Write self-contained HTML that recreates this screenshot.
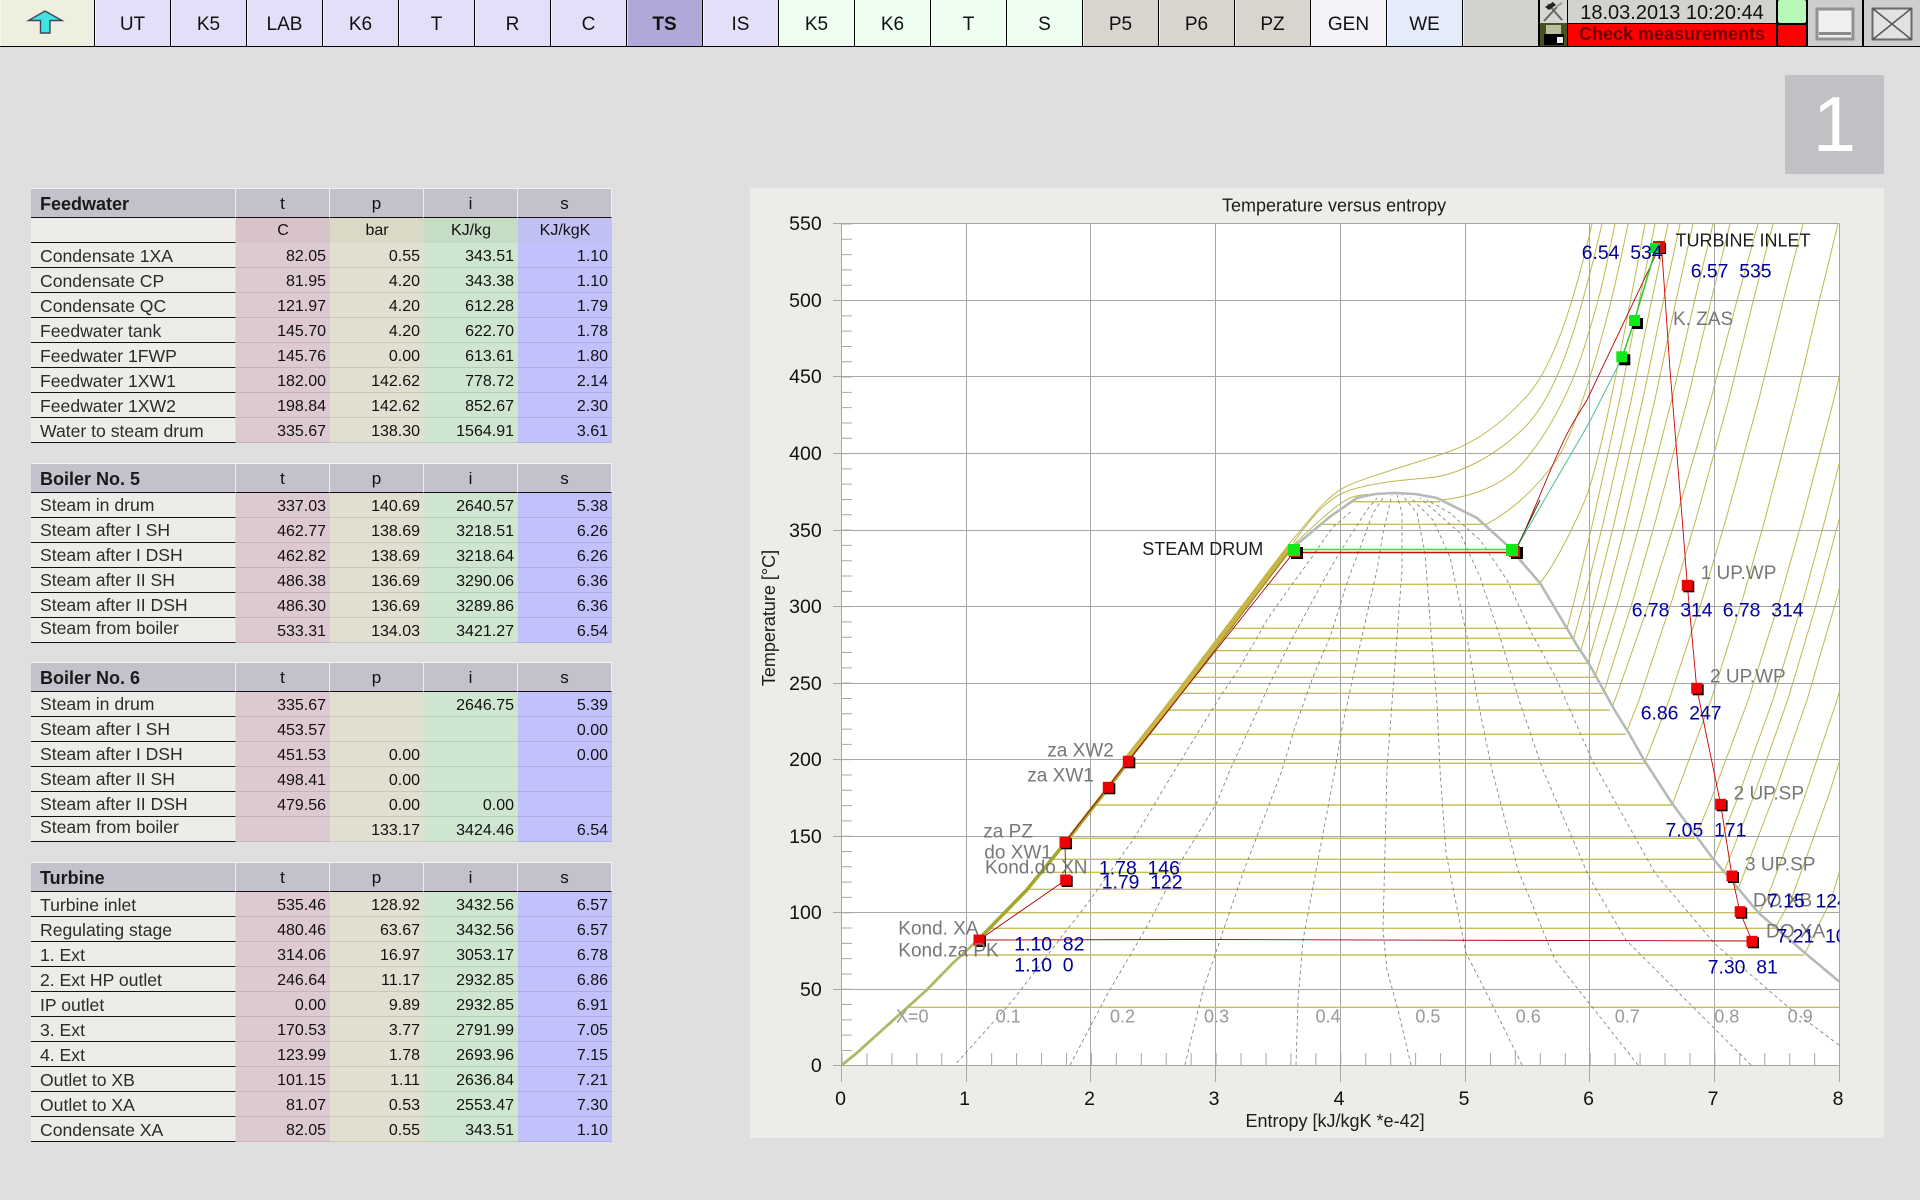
<!DOCTYPE html>
<html><head><meta charset="utf-8"><title>Temperature versus entropy</title>
<style>
html,body{margin:0;padding:0;width:1920px;height:1200px;overflow:hidden;background:#dfdfdf;font-family:"Liberation Sans",sans-serif;color:#111}
#bar{position:absolute;left:0;top:0;width:1539px;height:46px;display:flex;gap:1px;background:#000;border-bottom:1px solid #000}
#bar div{width:75px;height:46px;display:flex;align-items:center;justify-content:center;font-size:19px;padding-top:3px;box-sizing:border-box;box-shadow:inset 1px 0 0 rgba(255,255,255,.6)}
#bar .u{background:#e4def8}#bar .m{background:#eefff2}#bar .g{background:#d8d5ce}
.a{position:absolute}
.tb{position:absolute;left:31px;width:581px}
.r{display:flex;height:25px}
.r>div{box-sizing:border-box;height:25px;white-space:nowrap;overflow:hidden}
.n{width:205px;background:#eeece8;border-bottom:1px solid #111;padding-left:9px;font-size:17.6px;color:#2b2b2b;border-right:1px solid #dfdfdf}
.t,.p,.i,.s{width:94px;text-align:right;padding-right:4px;font-size:16px;border-bottom:1px solid rgba(0,0,0,.1)}
.r>.n{line-height:25px}
.tf .r>.n{line-height:26px}
.tt .r>.n{line-height:27px}
.r>.t,.r>.p,.r>.i,.r>.s{line-height:27px}
.t{background:#ddc9d1}.p{background:#e1dfcf}.i{background:#cee6d0}.s{background:#c1c1fb}
.h{height:30px}
.h>div{height:30px;background:#c4c0cc;border-bottom:1px solid #111;border-top:1px solid #f2f2f2;text-align:center;font-size:17px;padding:0;border-right:1px solid #eee}
.tb .r.h>div{line-height:30px}
.h>.n{text-align:left;padding-left:9px;font-weight:bold;font-size:18px;color:#1a1a1a}
.un>div{text-align:center;padding:0;border-bottom:0}
.tb .r.un>div{line-height:25px}
.un>.t{background:#d7c3c8}.un>.p{background:#d9d9c5}.un>.i{background:#c5dcc5}.un>.s{background:#c0c0f2}
.un>.n{border-bottom:1px solid #111}
.up{position:relative;top:-2px;display:block}
svg text{font-family:"Liberation Sans",sans-serif;font-size:18px;white-space:pre}
svg text.gr{fill:#777;font-size:19px}
svg text.bl{fill:#00009c;font-size:19.4px}
.bk{fill:#1c1c1c}.xq{fill:#999}
svg text.ax{font-size:19.5px;fill:#111}
</style></head><body>
<div id="bar">
<div style="width:94px;background:#efefdf"></div>
<div class="u">UT</div><div class="u">K5</div><div class="u">LAB</div><div class="u">K6</div><div class="u">T</div><div class="u">R</div><div class="u">C</div>
<div style="background:#b0a8d8;font-weight:bold">TS</div>
<div class="u">IS</div>
<div class="m">K5</div><div class="m">K6</div><div class="m">T</div><div class="m">S</div>
<div class="g">P5</div><div class="g">P6</div><div class="g">PZ</div>
<div style="background:#f5f3f8">GEN</div><div style="background:#e4ecfb">WE</div><div style="background:#d4d2cc"></div>
</div>
<svg class="a" style="left:0;top:0" width="95" height="46"><polygon points="45,11 62,20.5 50,20.5 50,33 40.5,33 40.5,20.5 28.5,20.5" fill="#40e4e4" stroke="#445" stroke-width="1.4"/></svg>

<div class="a" style="left:1539px;top:0;width:381px;height:47px;background:#000"></div>
<svg class="a" style="left:1540px;top:0" width="27" height="46">
<rect width="27" height="23" fill="#d6d6d2"/>
<path d="M4 21L17 7M8 4L22 20" stroke="#666" stroke-width="2" fill="none"/>
<path d="M5 7L13 2L16 5L9 10Z" fill="#222"/><path d="M17 6L22 3" stroke="#999" stroke-width="2"/>
<rect y="23" width="27" height="23" fill="#4c5020"/>
<rect x="6" y="25" width="15" height="9" fill="#b8bea0"/>
<rect x="4" y="34" width="20" height="11" fill="#000"/>
<rect x="17" y="37" width="6" height="6" fill="#eee"/>
</svg>
<div class="a" style="left:1568px;top:0;width:208px;height:23px;background:#d4d2cc;text-align:center;font-size:20px;line-height:26px">18.03.2013 10:20:44</div>
<div class="a" style="left:1568px;top:24px;width:208px;height:22px;background:#f00;text-align:center;font-size:18px;font-weight:bold;line-height:21px;color:#700000">Check measurements</div>
<div class="a" style="left:1778px;top:0;width:28px;height:23px;background:#b8f8b8;border-radius:2px"></div>
<div class="a" style="left:1778px;top:25px;width:28px;height:21px;background:#f00;border-radius:2px"></div>
<svg class="a" style="left:1808px;top:0" width="112" height="46">
<rect width="54" height="46" fill="#cecece"/>
<rect x="9" y="9" width="36" height="30" fill="#efefef" stroke="#919191" stroke-width="3"/>
<rect x="11" y="32" width="32" height="3" fill="#8a8a8a"/>
<rect x="56" y="0" width="56" height="46" fill="#cecece"/>
<rect x="64.5" y="8.5" width="39" height="31" fill="#e2e2e2" stroke="#6a6a6a" stroke-width="2"/>
<path d="M64 8L104 40M104 8L64 40" stroke="#555" stroke-width="1.5"/>
</svg>

<div class="a" style="left:1785px;top:75px;width:99px;height:99px;background:#c2c0c4;color:#fff;font-size:78px;line-height:99px;text-align:center;">1</div>

<div class="tb tf" style="top:188px">
<div class="r h"><div class="n">Feedwater</div><div class="t">t</div><div class="p">p</div><div class="i">i</div><div class="s">s</div></div>
<div class="r un"><div class="n"></div><div class="t">C</div><div class="p">bar</div><div class="i">KJ/kg</div><div class="s">KJ/kgK</div></div>
<div class="r"><div class="n">Condensate 1XA</div><div class="t">82.05</div><div class="p">0.55</div><div class="i">343.51</div><div class="s">1.10</div></div>
<div class="r"><div class="n">Condensate CP</div><div class="t">81.95</div><div class="p">4.20</div><div class="i">343.38</div><div class="s">1.10</div></div>
<div class="r"><div class="n">Condensate QC</div><div class="t">121.97</div><div class="p">4.20</div><div class="i">612.28</div><div class="s">1.79</div></div>
<div class="r"><div class="n">Feedwater tank</div><div class="t">145.70</div><div class="p">4.20</div><div class="i">622.70</div><div class="s">1.78</div></div>
<div class="r"><div class="n">Feedwater 1FWP</div><div class="t">145.76</div><div class="p">0.00</div><div class="i">613.61</div><div class="s">1.80</div></div>
<div class="r"><div class="n">Feedwater 1XW1</div><div class="t">182.00</div><div class="p">142.62</div><div class="i">778.72</div><div class="s">2.14</div></div>
<div class="r"><div class="n">Feedwater 1XW2</div><div class="t">198.84</div><div class="p">142.62</div><div class="i">852.67</div><div class="s">2.30</div></div>
<div class="r"><div class="n">Water to steam drum</div><div class="t">335.67</div><div class="p">138.30</div><div class="i">1564.91</div><div class="s">3.61</div></div>
</div>

<div class="tb" style="top:463px">
<div class="r h"><div class="n">Boiler No. 5</div><div class="t">t</div><div class="p">p</div><div class="i">i</div><div class="s">s</div></div>
<div class="r"><div class="n">Steam in drum</div><div class="t">337.03</div><div class="p">140.69</div><div class="i">2640.57</div><div class="s">5.38</div></div>
<div class="r"><div class="n">Steam after I SH</div><div class="t">462.77</div><div class="p">138.69</div><div class="i">3218.51</div><div class="s">6.26</div></div>
<div class="r"><div class="n">Steam after I DSH</div><div class="t">462.82</div><div class="p">138.69</div><div class="i">3218.64</div><div class="s">6.26</div></div>
<div class="r"><div class="n">Steam after II SH</div><div class="t">486.38</div><div class="p">136.69</div><div class="i">3290.06</div><div class="s">6.36</div></div>
<div class="r"><div class="n">Steam after II DSH</div><div class="t">486.30</div><div class="p">136.69</div><div class="i">3289.86</div><div class="s">6.36</div></div>
<div class="r"><div class="n"><span class="up">Steam from boiler</span></div><div class="t">533.31</div><div class="p">134.03</div><div class="i">3421.27</div><div class="s">6.54</div></div>
</div>

<div class="tb" style="top:662px">
<div class="r h"><div class="n">Boiler No. 6</div><div class="t">t</div><div class="p">p</div><div class="i">i</div><div class="s">s</div></div>
<div class="r"><div class="n">Steam in drum</div><div class="t">335.67</div><div class="p"></div><div class="i">2646.75</div><div class="s">5.39</div></div>
<div class="r"><div class="n">Steam after I SH</div><div class="t">453.57</div><div class="p"></div><div class="i"></div><div class="s">0.00</div></div>
<div class="r"><div class="n">Steam after I DSH</div><div class="t">451.53</div><div class="p">0.00</div><div class="i"></div><div class="s">0.00</div></div>
<div class="r"><div class="n">Steam after II SH</div><div class="t">498.41</div><div class="p">0.00</div><div class="i"></div><div class="s"></div></div>
<div class="r"><div class="n">Steam after II DSH</div><div class="t">479.56</div><div class="p">0.00</div><div class="i">0.00</div><div class="s"></div></div>
<div class="r"><div class="n"><span class="up">Steam from boiler</span></div><div class="t"></div><div class="p">133.17</div><div class="i">3424.46</div><div class="s">6.54</div></div>
</div>

<div class="tb tt" style="top:862px">
<div class="r h"><div class="n">Turbine</div><div class="t">t</div><div class="p">p</div><div class="i">i</div><div class="s">s</div></div>
<div class="r"><div class="n">Turbine inlet</div><div class="t">535.46</div><div class="p">128.92</div><div class="i">3432.56</div><div class="s">6.57</div></div>
<div class="r"><div class="n">Regulating stage</div><div class="t">480.46</div><div class="p">63.67</div><div class="i">3432.56</div><div class="s">6.57</div></div>
<div class="r"><div class="n">1. Ext</div><div class="t">314.06</div><div class="p">16.97</div><div class="i">3053.17</div><div class="s">6.78</div></div>
<div class="r"><div class="n">2. Ext HP outlet</div><div class="t">246.64</div><div class="p">11.17</div><div class="i">2932.85</div><div class="s">6.86</div></div>
<div class="r"><div class="n">IP outlet</div><div class="t">0.00</div><div class="p">9.89</div><div class="i">2932.85</div><div class="s">6.91</div></div>
<div class="r"><div class="n">3. Ext</div><div class="t">170.53</div><div class="p">3.77</div><div class="i">2791.99</div><div class="s">7.05</div></div>
<div class="r"><div class="n">4. Ext</div><div class="t">123.99</div><div class="p">1.78</div><div class="i">2693.96</div><div class="s">7.15</div></div>
<div class="r"><div class="n">Outlet to XB</div><div class="t">101.15</div><div class="p">1.11</div><div class="i">2636.84</div><div class="s">7.21</div></div>
<div class="r"><div class="n">Outlet to XA</div><div class="t">81.07</div><div class="p">0.53</div><div class="i">2553.47</div><div class="s">7.30</div></div>
<div class="r"><div class="n">Condensate XA</div><div class="t">82.05</div><div class="p">0.55</div><div class="i">343.51</div><div class="s">1.10</div></div>
</div>

<svg class="a" style="left:0;top:0" width="1920" height="1200" viewBox="0 0 1920 1200">
<defs>
<clipPath id="pl"><rect x="842" y="224" width="997.5" height="842"/></clipPath>
<polyline id="iso" fill="none" stroke="#c0b84c" stroke-width="1" vector-effect="non-scaling-stroke" points="0,224 -19,300 -43,400 -75,520 -98,600 -130,700 -168,800 -210,900 -250,960 -285,1000 -340,1065"/>
<g id="mr"><rect x="-4" y="-4" width="11" height="11" fill="#000"/><rect x="-5.5" y="-5.5" width="11" height="11" fill="#f00000"/></g>
<g id="mg"><rect x="-3" y="-3" width="11" height="11" fill="#000"/><rect x="-6" y="-6" width="11" height="11" fill="#10e818"/></g>
</defs>
<rect x="750" y="188" width="1134" height="950" fill="#eeece8"/>
<rect x="842" y="224" width="997.5" height="841.5" fill="#fff"/>

<g clip-path="url(#pl)">
<use href="#iso" transform="translate(1984,0) scale(.729,1)"/>
<use href="#iso" transform="translate(1971,0) scale(.857,1)"/>
<use href="#iso" transform="translate(1951.7,0) scale(.882,1)"/>
<use href="#iso" transform="translate(1926,0) scale(.915,1)"/>
<use href="#iso" transform="translate(1909,0) scale(.933,1)"/>
<use href="#iso" transform="translate(1896,0) scale(.947,1)"/>
<use href="#iso" transform="translate(1876,0) scale(.983,1)"/>
<use href="#iso" transform="translate(1838,0) scale(.976,1)"/>
<use href="#iso" transform="translate(1803,0) scale(1.03,1)"/>
<use href="#iso" transform="translate(1773,0) scale(1.03,1)"/>
<use href="#iso" transform="translate(1758,0) scale(1.1,1)"/>
<use href="#iso" transform="translate(1730,0) scale(.99,1)"/>
<use href="#iso" transform="translate(1713,0) scale(.962,1)"/>
<use href="#iso" transform="translate(1693,0) scale(.888,1)"/>
<use href="#iso" transform="translate(1680,0) scale(.868,1)"/>
<use href="#iso" transform="translate(1668,0) scale(.855,1)"/>
<use href="#iso" transform="translate(1655,0) scale(.822,1)"/>
<g fill="none" stroke="#c0b84c" stroke-width="1">
<path d="M1540 583C1553 567 1570 535 1585 500S1625 330 1645 224"/>
<path d="M1485 525C1510 512 1535 490 1555 462S1605 340 1628 224"/>
<path d="M1440 500C1465 498 1490 490 1510 475S1565 410 1585 345S1605 270 1615 224"/>
<path d="M1293 543C1310 520 1325 500 1345 492S1400 480 1427 478S1490 460 1522 430S1575 340 1602 224"/>
<path d="M1288 545C1310 520 1325 497 1345 487S1420 462 1448 452S1500 425 1526 397S1572 310 1592 224"/>
<path d="M1293 545C1315 525 1335 505 1350 498S1390 496 1410 496"/>
</g>
<polygon fill="#fff" points="842,1066 926.7,990 980,938 1026.7,890 1065,843 1108,788 1128,762 1176.7,700 1293,547 1300,541.7 1330,516.7 1356.7,498 1375,494 1393,493 1415,494 1437,498 1477,518 1507,545 1520,560 1540,583 1578,647 1588.6,663 1614.5,710 1630,735 1644,760 1671.8,803 1712.5,858 1758.7,913 1805,953 1839.4,981.7 1839.4,1066"/>
</g>

<g stroke="#a6a6a6" stroke-width="1" fill="none">
<path d="M833 223.5H1839.5M833 300.5H1839.5M833 376.5H1839.5M833 453.5H1839.5M833 530.5H1839.5M833 606.5H1839.5M833 683.5H1839.5M833 759.5H1839.5M833 836.5H1839.5M833 912.5H1839.5M833 989.5H1839.5M833 1065.5H1839.5"/>
<path d="M841.5 224V1082M966.5 224V1082M1090.5 224V1082M1215.5 224V1082M1340.5 224V1082M1465.5 224V1082M1589.5 224V1082M1714.5 224V1082M1839.5 224V1082"/>
<path d="M846.7 223.5V1065" stroke-width="10" stroke-dasharray="1 14.305"/>
<path d="M841.5 1059H1839.5" stroke-width="12" stroke-dasharray="1 23.94"/>
</g>

<g stroke="#c6bf5e" stroke-width="1.4" fill="none">
<path d="M1350 501.7H1440M1320 524.3H1485M1266 584.3H1540M1231 628.3H1567M1223.6 638.3H1574M1214 650.7H1581M1204.5 663.3H1588.6M1194 677.3H1595M1182 693.3H1603M1169 710H1610M1150 734.3H1626M1127 763.3H1645M1095 805H1672M1069 838.3H1695M1052 859.3H1713M1041 872.3H1724M1027 889.3H1738M1005 912.7H1759M990 928.3H1775M962 955H1804M907 1007.3H1839"/>
</g>

<g fill="none" stroke="#808080" stroke-width=".85" stroke-dasharray="3.5 3" clip-path="url(#pl)">
<polyline points="956.7,1063 1013,1000 1090,900 1133,840 1176.7,767 1220,697 1240,667 1267,620 1288,590 1312,557 1332,528 1353,510"/>
<polyline points="1070,1065 1108,993 1146.7,927 1180,863 1216.7,803 1230,770 1250,727 1270,683 1293,637 1320,587 1337,557 1352,533 1367,510 1377,498"/>
<polyline points="1185,1065 1203,990 1243,873 1267,810 1282,770 1295,727 1313,677 1330,637 1348,580 1363,540 1373,513 1383,498"/>
<polyline points="1296,1065 1298,1000 1303,940 1335,770 1343,723 1353,677 1365,623 1377,570 1383,533 1390,503 1392,495"/>
<polyline points="1411,1065 1398,1010 1387,970 1383,930 1387,770 1392,703 1397,637 1402,570 1402,513 1397,495"/>
<polyline points="1522,1065 1490,1000 1466,953 1446,853 1440,770 1437,703 1430,620 1425,553 1417,513 1402,495"/>
<polyline points="1638,1065 1555,960 1518,870 1492,770 1477,697 1467,637 1450,557 1433,520 1410,497"/>
<polyline points="1751,1065 1626,940 1589,877 1543,770 1520,703 1500,637 1480,577 1460,533 1420,498"/>
<polyline points="1839,1045 1788,1007 1714,943 1655,873 1592,760 1557,680 1530,630 1507,580 1480,540 1450,513 1427,500"/>
</g>

<polyline fill="none" stroke="#b4bab4" stroke-width="2.6" points="1293,547 1300,541.7 1330,516.7 1356.7,498 1375,494 1393,493 1415,494 1437,498 1477,518 1507,545 1520,560 1540,583 1578,647 1588.6,663 1614.5,710 1630,735 1644,760 1671.8,803 1712.5,858 1758.7,913 1805,953 1839.4,981.7"/>
<polyline fill="none" stroke="#aeb866" stroke-width="2.8" points="842,1065 856.7,1053 926.7,990 953,963 980,938"/>
<polyline fill="none" stroke="#a4a62e" stroke-width="3.6" points="980,938 1026.7,890 1065,843 1108,788 1128,762"/>
<polyline fill="none" stroke="#c9b544" stroke-width="5.5" points="1126,760 1174.7,698 1291,545"/>
<polyline fill="none" stroke="#8d7b20" stroke-width="1" points="1128,762 1176.7,700 1293,547"/>

<g fill="none" stroke="#a80000" stroke-width=".9">
<polyline points="979,940 1065.7,880 1065,842 1108,787 1128,761 1294,552"/>
<polyline points="979,940 1200,939.5 1752,941"/>
<path stroke="#b80000" d="M1517.6 547C1530 520 1545 482 1558 453S1575 420 1587 400L1652 263L1659 247"/>
<polyline stroke="#cc0000" points="1659,247 1662,253 1670,370 1681.7,513 1687.3,585 1696.7,688 1720.6,804 1732,876 1740,912 1752,941"/>
</g>
<path d="M1294 552.5H1516" stroke="#c81000" stroke-width="1.6"/>
<path d="M1294 549.5H1512" stroke="#30e040" stroke-width="1.4"/>
<polyline fill="none" stroke="#50c090" stroke-width="1" points="1517,547 1589,423 1622,358"/>
<polyline fill="none" stroke="#30c830" stroke-width="1.5" points="1622,358 1634,322 1656,248"/>
<polyline fill="none" stroke="#304010" stroke-width="1" points="1517,547 1540,500"/>

<use href="#mr" x="979" y="940"/><use href="#mr" x="1065.7" y="880"/><use href="#mr" x="1065" y="842.3"/><use href="#mr" x="1108.3" y="787.3"/><use href="#mr" x="1128.3" y="761.3"/>
<use href="#mr" x="1687.3" y="585.3"/><use href="#mr" x="1696.7" y="688.3"/><use href="#mr" x="1720.6" y="804.3"/><use href="#mr" x="1732" y="876"/><use href="#mr" x="1740.2" y="911.7"/><use href="#mr" x="1752" y="941.3"/>
<rect x="1291" y="547" width="12" height="12" fill="#000"/><rect x="1289" y="546" width="11" height="11" fill="#c02000"/>
<rect x="1511" y="547" width="12" height="12" fill="#000"/><rect x="1509" y="546" width="11" height="11" fill="#c02000"/>
<rect x="1288" y="544" width="12" height="12" fill="#10e818"/><rect x="1506" y="544" width="12" height="12" fill="#10e818"/>
<rect x="1655" y="243" width="11" height="11" fill="#000"/><rect x="1653" y="241" width="12" height="12" fill="#d81000"/>
<rect x="1650" y="243" width="10" height="10" fill="#10d830"/>
<use href="#mg" x="1635" y="321"/><use href="#mg" x="1622.3" y="357.3"/>

<text x="1222" y="211.7" class="bk">Temperature versus entropy</text>
<text x="821.7" y="230" class="ax" text-anchor="end">550</text><text x="821.7" y="307" class="ax" text-anchor="end">500</text><text x="821.7" y="383" class="ax" text-anchor="end">450</text><text x="821.7" y="460" class="ax" text-anchor="end">400</text><text x="821.7" y="537" class="ax" text-anchor="end">350</text><text x="821.7" y="613" class="ax" text-anchor="end">300</text><text x="821.7" y="690" class="ax" text-anchor="end">250</text><text x="821.7" y="766" class="ax" text-anchor="end">200</text><text x="821.7" y="843" class="ax" text-anchor="end">150</text><text x="821.7" y="919" class="ax" text-anchor="end">100</text><text x="821.7" y="996" class="ax" text-anchor="end">50</text><text x="821.7" y="1072" class="ax" text-anchor="end">0</text>
<text x="840.5" y="1105" class="ax" text-anchor="middle">0</text><text x="964.5" y="1105" class="ax" text-anchor="middle">1</text><text x="1089.5" y="1105" class="ax" text-anchor="middle">2</text><text x="1214" y="1105" class="ax" text-anchor="middle">3</text><text x="1339" y="1105" class="ax" text-anchor="middle">4</text><text x="1464" y="1105" class="ax" text-anchor="middle">5</text><text x="1588.5" y="1105" class="ax" text-anchor="middle">6</text><text x="1713" y="1105" class="ax" text-anchor="middle">7</text><text x="1838" y="1105" class="ax" text-anchor="middle">8</text>
<text x="1245.5" y="1127" class="bk">Entropy [kJ/kgK *e-42]</text>
<text transform="translate(775,618) rotate(-90)" text-anchor="middle" class="bk">Temperature [°C]</text>

<text x="1142.3" y="555" class="bk">STEAM DRUM</text>
<text x="1675.5" y="246.7" class="bk">TURBINE INLET</text>
<text x="1673" y="325" class="gr">K. ZAS</text>
<text x="1700.7" y="579" class="gr">1 UP.WP</text>
<text x="1710" y="682.7" class="gr">2 UP.WP</text>
<text x="1733.6" y="799.3" class="gr">2 UP.SP</text>
<text x="1745" y="870.7" class="gr">3 UP.SP</text>
<g clip-path="url(#pl)">
<text x="1753" y="906.7" class="gr">DO XB</text>
<text x="1766" y="937.3" class="gr">DO XA</text>
<text x="1767" y="907.3" class="bl">7.15  124</text>
<text x="1776.5" y="942.7" class="bl">7.21  101</text>
</g>
<text x="1047.3" y="756.7" class="gr">za XW2</text>
<text x="1027.3" y="781.7" class="gr">za XW1</text>
<text x="983.3" y="837.3" class="gr">za PZ</text>
<text x="984.3" y="858.7" class="gr">do XW1</text>
<text x="985" y="873.3" class="gr">Kond.do XN</text>
<text x="898.3" y="934.3" class="gr">Kond. XA</text>
<text x="898.3" y="956.7" class="gr">Kond.za PK</text>
<text x="1581.7" y="259" class="bl">6.54  534</text>
<text x="1690.7" y="277.7" class="bl">6.57  535</text>
<text x="1631.7" y="616.7" class="bl">6.78  314</text>
<text x="1722.7" y="616.7" class="bl">6.78  314</text>
<text x="1640.7" y="719.3" class="bl">6.86  247</text>
<text x="1665.5" y="836.7" class="bl">7.05  171</text>
<text x="1707.7" y="973.3" class="bl">7.30  81</text>
<text x="1099" y="874.7" class="bl">1.78  146</text>
<text x="1101.7" y="888.7" class="bl">1.79  122</text>
<text x="1014.3" y="950.7" class="bl">1.10  82</text>
<text x="1014.3" y="971.7" class="bl">1.10  0</text>
<text x="896" y="1022.7" class="xq">X=0</text><text x="995.7" y="1022.7" class="xq">0.1</text><text x="1110" y="1022.7" class="xq">0.2</text><text x="1204" y="1022.7" class="xq">0.3</text><text x="1315.5" y="1022.7" class="xq">0.4</text><text x="1415.4" y="1022.7" class="xq">0.5</text><text x="1515.7" y="1022.7" class="xq">0.6</text><text x="1614.8" y="1022.7" class="xq">0.7</text><text x="1714.3" y="1022.7" class="xq">0.8</text><text x="1787.6" y="1022.7" class="xq">0.9</text>
</svg>
</body></html>
